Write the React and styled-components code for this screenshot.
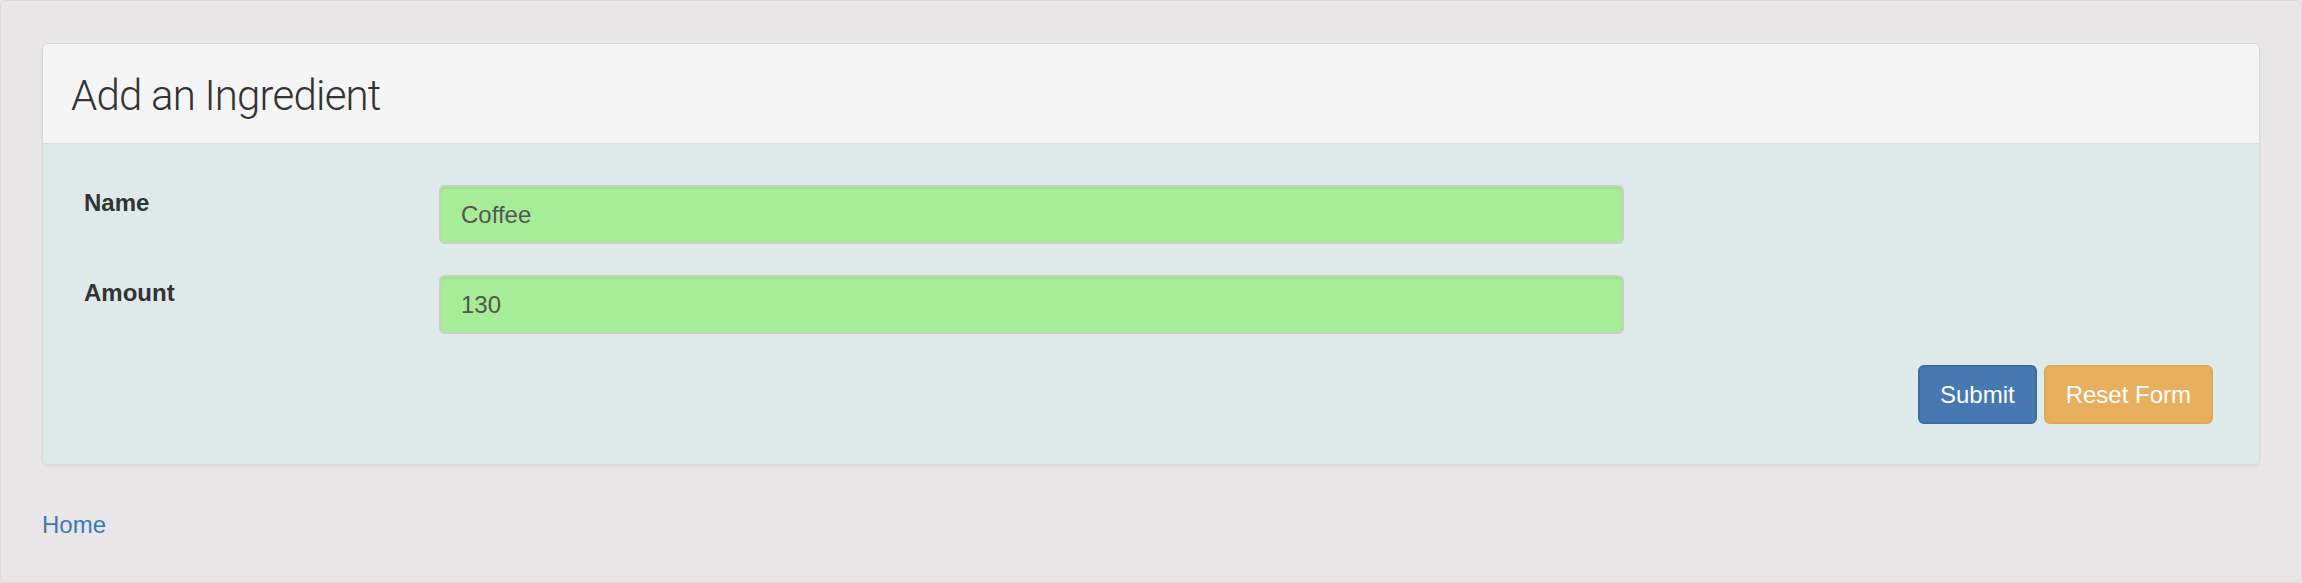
import React, {useState} from 'react';
import styled, {createGlobalStyle} from "styled-components";

const GlobalStyle = createGlobalStyle `
  html, body {
    margin: 0;
    padding: 0;
    background: #e8e6e7;
  }
  * {
    box-sizing: border-box;
  }
`;

const Frame = styled.div `
  height: 583px;
  border: 1px solid #dad8d9;
  border-radius: 6px;
  background: #e8e6e7;
  padding: 42px 41px 0 41px;
  font-family: "Liberation Sans", Arial, sans-serif;
  font-size: 24px;
  line-height: 34px;
  color: #333;
`;

const Panel = styled.div `
  border: 1px solid #d9d9d9;
  border-radius: 6px;
  overflow: hidden;
  box-shadow: 0 2px 3px rgba(0, 0, 0, 0.06);
`;

const PanelHeading = styled.div `
  height: 100px;
  background: #f5f5f5;
  border-bottom: 1px solid #dcdcdc;
  padding: 22px 28px 0;
`;

const Title = styled.h3 `
  margin: 0;
  font-family: Roboto, "Liberation Sans", sans-serif;
  font-weight: 300;
  font-size: 42px;
  letter-spacing: -0.8px;
  line-height: 60px;
  color: #333;
`;

const PanelBody = styled.form `
  background: #dee9e9;
  padding: 41px 46px 40px 41px;
  display: flex;
  flex-direction: column;
  gap: 31px;
`;

const FieldRow = styled.div `
  display: grid;
  grid-template-columns: 355px 1185px;
`;

const Label = styled.label `
  font-weight: bold;
  padding-top: 1px;
  line-height: 34px;
`;

const Input = styled.input `
  height: 59px;
  width: 100%;
  border: 2px solid #c9cfc8;
  border-radius: 6px;
  background: #a7ed97;
  padding: 0 20px;
  font-family: "Liberation Sans", Arial, sans-serif;
  font-size: 24px;
  color: #555;
  box-shadow: inset 0 2px 2px rgba(0, 0, 0, 0.06);
  outline: none;
`;

const Actions = styled.div `
  display: flex;
  justify-content: flex-end;
  gap: 7px;
`;

const Button = styled.button `
  height: 59px;
  padding: 0 20px;
  border: 2px solid ${props => props.$border};
  border-radius: 6px;
  background: ${props => props.$bg};
  color: #fff;
  font-family: "Liberation Sans", Arial, sans-serif;
  font-size: 24px;
  cursor: pointer;
`;

const HomeLink = styled.a `
  display: inline-block;
  margin-top: 43px;
  color: #3f77b6;
  text-decoration: none;
`;

const App = () => {

    const [name, setName] = useState("Coffee");
    const [amount, setAmount] = useState("130");

    const handleReset = (event) => {
        event.preventDefault();
        setName("");
        setAmount("");
    }

    return (
        <Frame>
            <GlobalStyle/>
            <Panel>
                <PanelHeading>
                    <Title>Add an Ingredient</Title>
                </PanelHeading>
                <PanelBody onSubmit={(e) => e.preventDefault()}>
                    <FieldRow>
                        <Label htmlFor="name">Name</Label>
                        <Input id="name" value={name} onChange={(e) => setName(e.target.value)}/>
                    </FieldRow>
                    <FieldRow>
                        <Label htmlFor="amount">Amount</Label>
                        <Input id="amount" value={amount} onChange={(e) => setAmount(e.target.value)}/>
                    </FieldRow>
                    <Actions>
                        <Button type="submit" $bg="#4679b2" $border="#3d6ca3">Submit</Button>
                        <Button $bg="#e8af5e" $border="#e3a650" onClick={handleReset}>Reset Form</Button>
                    </Actions>
                </PanelBody>
            </Panel>
            <HomeLink href="#">Home</HomeLink>
        </Frame>
    );
};

export default App;
